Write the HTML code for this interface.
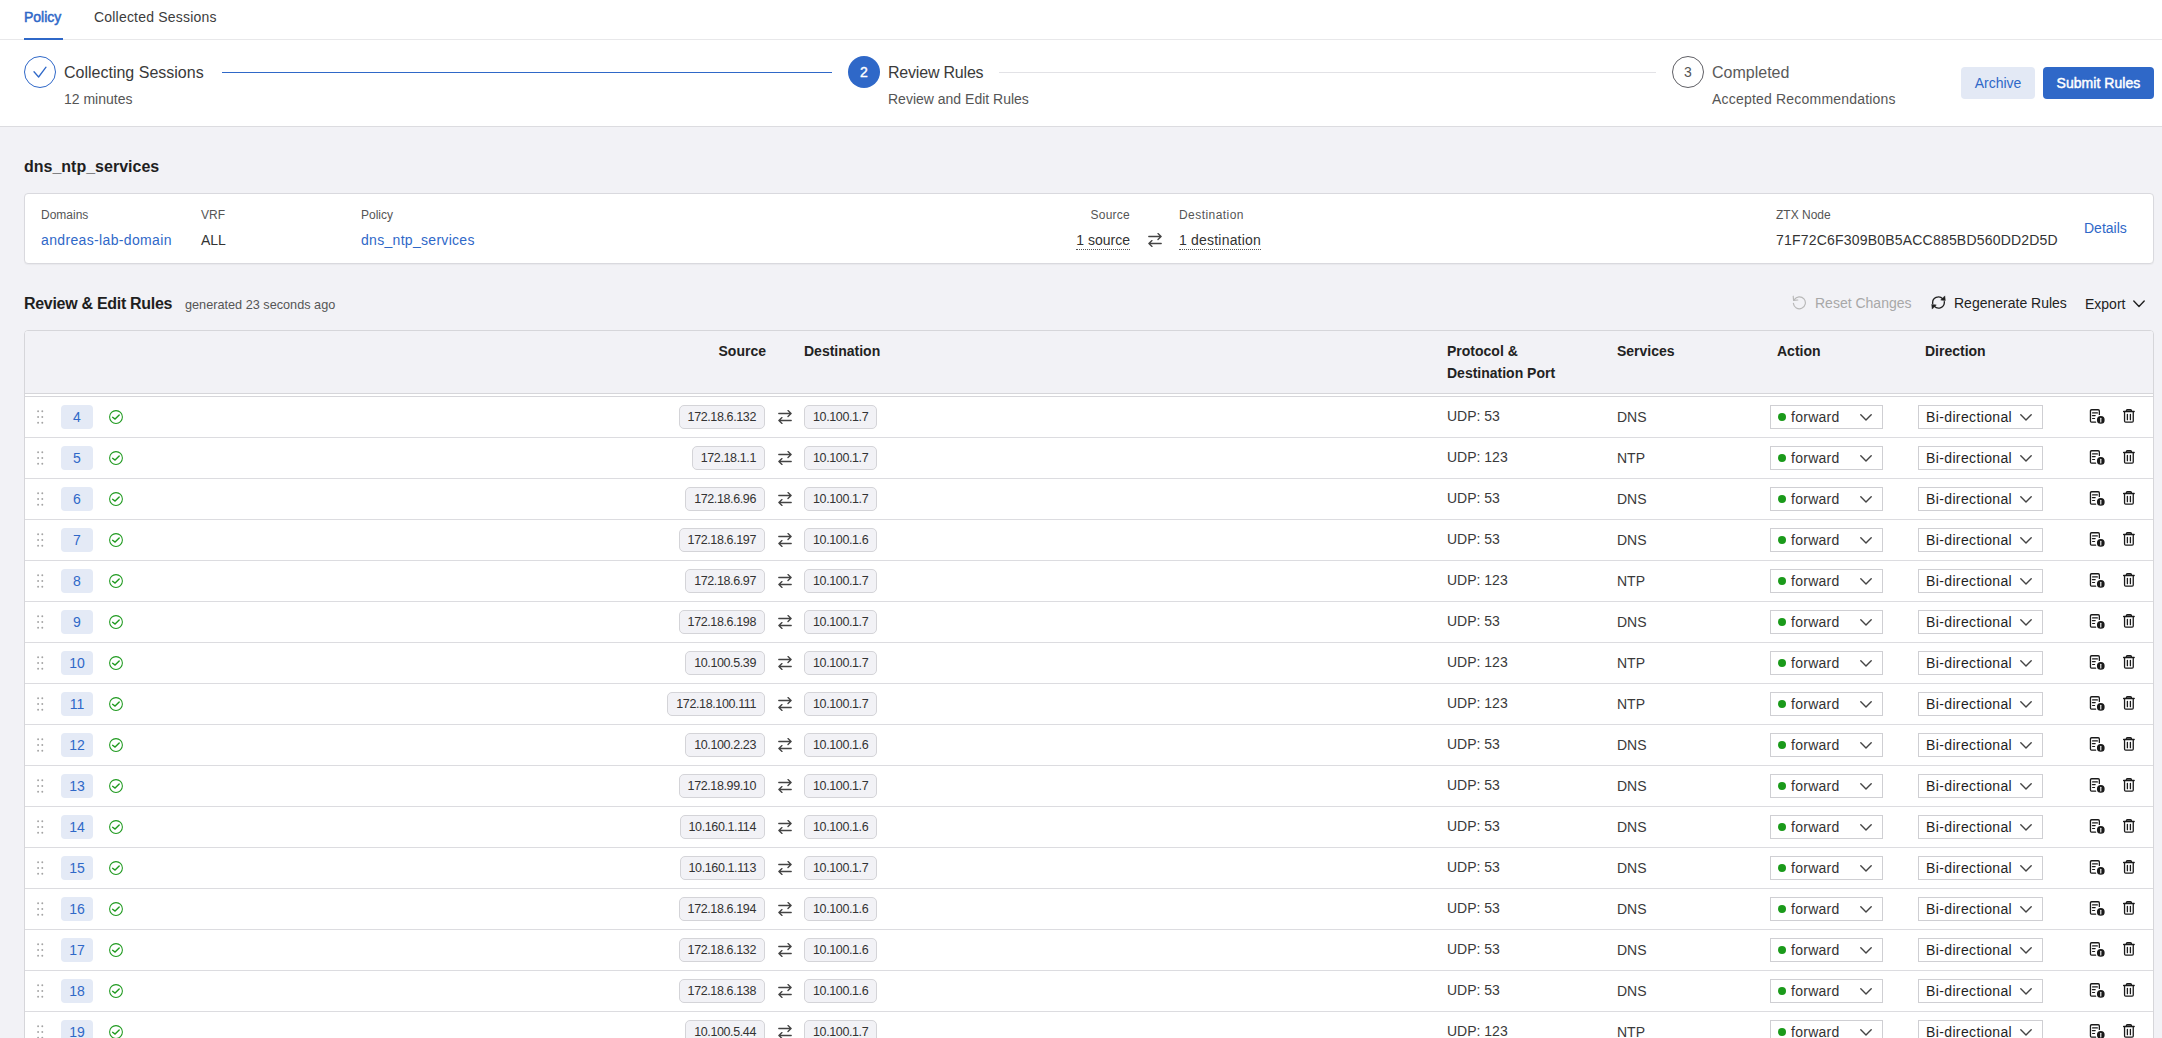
<!DOCTYPE html>
<html><head><meta charset="utf-8">
<style>
*{box-sizing:border-box;margin:0;padding:0}
html,body{width:2162px;height:1038px;overflow:hidden}
body{background:#f2f2f6;font-family:"Liberation Sans",sans-serif;color:#222;position:relative}
.abs{position:absolute;white-space:nowrap}
#top{position:absolute;left:0;top:0;width:2162px;height:127px;background:#fff;border-bottom:1px solid #dcdce0}
.tabline{position:absolute;left:0;top:39px;width:2162px;height:1px;background:#e8e8ea}
.tabul{position:absolute;left:24px;top:38px;width:39px;height:2px;background:#2f68c8}
.circ{position:absolute;width:32px;height:32px;border-radius:50%;top:56px}
.steptitle{position:absolute;top:63px;font-size:16px;line-height:20px;color:#3a3a3a;white-space:nowrap}
.stepsub{position:absolute;top:90px;font-size:14px;line-height:18px;color:#555;white-space:nowrap}
.btn{position:absolute;top:67px;height:32px;border-radius:4px;font-size:14px;line-height:32px;text-align:center;white-space:nowrap}
.card{position:absolute;left:24px;top:193px;width:2130px;height:71px;background:#fff;border:1px solid #d9d9de;border-radius:4px;box-shadow:0 1px 1px rgba(0,0,0,0.04)}
.lbl{position:absolute;top:208px;font-size:12px;line-height:15px;color:#555;white-space:nowrap}
.val{position:absolute;top:231px;font-size:14px;line-height:18px;color:#333;white-space:nowrap}
.link{color:#2f68c8}
.tbl{position:absolute;left:24px;top:330px;width:2130px;height:720px;background:#fff;border:1px solid #d6d6da;border-radius:4px 4px 0 0;overflow:hidden}
.thead{position:absolute;left:0;top:0;width:100%;height:63px;background:#f2f2f6;border-bottom:1px solid #d6d6da}
.tbline{position:absolute;left:0;top:65px;width:100%;height:1px;background:#d6d6da}
.th{position:absolute;font-size:14px;line-height:22px;font-weight:700;color:#222;white-space:nowrap}
.row{position:absolute;left:0;width:2162px;height:41px;border-bottom:1px solid #dcdce0}
.row > div{position:absolute}
.drag{left:37px;top:12px;width:8px;height:16px}
.num{left:61px;top:8px;width:32px;height:24px;border-radius:4px;background:#e4eaf6;color:#2f68c8;font-size:14px;line-height:24px;text-align:center}
.chk{left:109px;top:13px;width:14px;height:14px}
.pill{top:8px;height:24px;border:1px solid #d4d4d8;background:#f2f2f6;border-radius:5px;font-size:12.5px;line-height:22px;color:#333;white-space:nowrap;padding:0 8px;letter-spacing:-0.38px}
.src{right:calc(2162px - 765px)}
.dst{left:804px}
.rarr{left:778px;top:13px;width:14px;height:14px}
.proto{left:1447px;top:11px;font-size:14px;line-height:17px;color:#3a3a3a;white-space:nowrap}
.svc{left:1617px;top:12px;font-size:14px;line-height:17px;color:#3a3a3a}
.sel{top:8px;height:24px;border:1px solid #cfcfd3;background:#fff;font-size:14px;line-height:22px;color:#333;white-space:nowrap}
.act{left:1770px;width:113px}
.dir{left:1918px;width:125px}
.sel .dot{position:absolute;left:7px;top:7px;width:8px;height:8px;border-radius:50%;background:#1a9a1a}
.act .t{position:absolute;left:20px;top:0;letter-spacing:0.27px}
.dir .t{position:absolute;left:7px;top:0;color:#1f1f1f;letter-spacing:0.37px}
.sel .ch{position:absolute;top:8px;width:12px;height:7px}
.act .ch{left:89px}
.dir .ch{left:101px}
.doc{left:2089px;top:12px;width:16px;height:16px}
.trash{left:2122px;top:12px;width:14px;height:15px}

</style></head><body>
<div id="top">
  <div class="tabline"></div>
  <div class="tabul"></div>
  <div class="abs" style="left:24px;top:9px;font-size:14px;line-height:17px;color:#2f68c8;-webkit-text-stroke:0.5px #2f68c8">Policy</div>
  <div class="abs" style="left:94px;top:9px;font-size:14px;line-height:17px;color:#3c3c3c;letter-spacing:0.2px">Collected Sessions</div>

  <div class="circ" style="left:24px;border:1.2px solid #2f68c8"><svg width="32" height="32" viewBox="0 0 32 32" style="position:absolute;left:-1px;top:-1px"><path d="M10 15.8L14.6 21L22 11.2" fill="none" stroke="#2f68c8" stroke-width="1.3" stroke-linecap="round" stroke-linejoin="round"/></svg></div>
  <div class="steptitle" style="left:64px">Collecting Sessions</div>
  <div class="stepsub" style="left:64px">12 minutes</div>
  <div class="abs" style="left:222px;top:72px;width:610px;height:1px;background:#2f68c8"></div>

  <div class="circ" style="left:848px;background:#2f68c8;color:#fff;font-size:14px;line-height:32px;text-align:center;-webkit-text-stroke:0.4px #fff">2</div>
  <div class="steptitle" style="left:888px;letter-spacing:-0.2px">Review Rules</div>
  <div class="stepsub" style="left:888px">Review and Edit Rules</div>
  <div class="abs" style="left:999px;top:72px;width:657px;height:1px;background:#e2e2e6"></div>

  <div class="circ" style="left:1672px;border:1px solid #606066;color:#555;font-size:14px;line-height:30px;text-align:center">3</div>
  <div class="steptitle" style="left:1712px;color:#5a5a5a">Completed</div>
  <div class="stepsub" style="left:1712px;letter-spacing:0.2px">Accepted Recommendations</div>

  <div class="btn" style="left:1961px;width:74px;background:#e3e9f5;color:#2f68c8">Archive</div>
  <div class="btn" style="left:2043px;width:111px;background:#2f68c8;color:#fff;-webkit-text-stroke:0.45px #fff;letter-spacing:0.05px">Submit Rules</div>
</div>

<div class="abs" style="left:24px;top:157px;font-size:16px;line-height:20px;font-weight:700;color:#1f1f1f">dns_ntp_services</div>

<div class="card"></div>
<div class="lbl" style="left:41px">Domains</div>
<div class="val link" style="left:41px;letter-spacing:0.35px">andreas-lab-domain</div>
<div class="lbl" style="left:201px">VRF</div>
<div class="val" style="left:201px">ALL</div>
<div class="lbl" style="left:361px">Policy</div>
<div class="val link" style="left:361px;letter-spacing:0.3px">dns_ntp_services</div>
<div class="lbl" style="right:calc(2162px - 1130px);letter-spacing:0.25px">Source</div>
<div class="val" style="right:calc(2162px - 1130px);top:232px;border-bottom:1px dotted #555;line-height:17px">1 source</div>
<div class="abs" style="left:1148px;top:233px"><svg width="14" height="14" viewBox="0 0 14 14" style="display:block"><path d="M0.8 3.5H13.1M10 0.6L13.1 3.5L10 6.5M13.2 10.5H0.9M4 7.6L0.9 10.5L4 13.4" fill="none" stroke="#444" stroke-width="1.35" stroke-linecap="round" stroke-linejoin="round"/></svg></div>
<div class="lbl" style="left:1179px;letter-spacing:0.45px">Destination</div>
<div class="val" style="left:1179px;top:232px;border-bottom:1px dotted #555;line-height:17px;letter-spacing:0.2px">1 destination</div>
<div class="lbl" style="left:1776px">ZTX Node</div>
<div class="val" style="left:1776px;letter-spacing:0.2px">71F72C6F309B0B5ACC885BD560DD2D5D</div>
<div class="abs link" style="left:2084px;top:219px;font-size:14px;line-height:18px">Details</div>

<div class="abs" style="left:24px;top:294px;font-size:16px;line-height:20px;font-weight:700;color:#1f1f1f;letter-spacing:-0.3px">Review &amp; Edit Rules</div>
<div class="abs" style="left:185px;top:297px;font-size:12.7px;line-height:16px;color:#555">generated 23 seconds ago</div>

<div class="abs" style="left:1792px;top:295px"><svg width="15" height="15" viewBox="0 0 15 15" style="display:block"><path d="M2.3 4.6A6 6 0 1 1 1.4 8.4" fill="none" stroke="#b8b8b8" stroke-width="1.15" stroke-linecap="round"/><path d="M1.2 1.2L1.6 5.4L5.8 5" fill="none" stroke="#b8b8b8" stroke-width="1.15" stroke-linecap="round" stroke-linejoin="round"/></svg></div>
<div class="abs" style="left:1815px;top:295px;font-size:14px;line-height:17px;color:#a8a8a8">Reset Changes</div>
<div class="abs" style="left:1931px;top:295px"><svg width="15" height="15" viewBox="0 0 15 15" style="display:block"><path d="M1.7 8.4A5.8 5.8 0 0 1 11.8 3.9M13.3 6.6A5.8 5.8 0 0 1 3.2 11.1" fill="none" stroke="#222" stroke-width="1.35" stroke-linecap="round"/><path d="M13.8 0.9L14.3 5.6L9.7 5.1Z M1.2 14.1L0.7 9.4L5.3 9.9Z" fill="#222" stroke="#222" stroke-width="0.5" stroke-linejoin="round"/></svg></div>
<div class="abs" style="left:1954px;top:295px;font-size:14px;line-height:17px;color:#222">Regenerate Rules</div>
<div class="abs" style="left:2085px;top:296px;font-size:14px;line-height:17px;color:#222">Export</div>
<div class="abs" style="left:2133px;top:300px"><svg width="12" height="8" viewBox="0 0 12 8" style="display:block"><path d="M0.8 1L6 6.5L11.2 1" fill="none" stroke="#222" stroke-width="1.4" stroke-linecap="round" stroke-linejoin="round"/></svg></div>

<div class="tbl">
  <div class="thead"></div>
  <div class="tbline"></div>
</div>
<div class="th" style="right:calc(2162px - 766px);top:340px">Source</div>
<div class="th" style="left:804px;top:340px">Destination</div>
<div class="th" style="left:1447px;top:340px">Protocol &amp;<br>Destination Port</div>
<div class="th" style="left:1617px;top:340px">Services</div>
<div class="th" style="left:1777px;top:340px">Action</div>
<div class="th" style="left:1925px;top:340px">Direction</div>

<div style="position:absolute;left:25px;top:0;width:2128px;height:1038px;overflow:hidden">
<div style="position:absolute;left:-25px;top:0;width:2162px;height:1038px">
<div class="row" style="top:397px">
<div class="drag"><svg width="8" height="16" viewBox="0 0 8 16" style="display:block"><g fill="#a4a4a4"><circle cx="1.1" cy="2.3" r="0.95"/><circle cx="5.3" cy="2.3" r="0.95"/><circle cx="1.1" cy="8" r="0.95"/><circle cx="5.3" cy="8" r="0.95"/><circle cx="1.1" cy="13.7" r="0.95"/><circle cx="5.3" cy="13.7" r="0.95"/></g></svg></div>
<div class="num">4</div>
<div class="chk"><svg width="14" height="14" viewBox="0 0 14 14" style="display:block"><circle cx="7" cy="7" r="6.4" fill="none" stroke="#1f9a1f" stroke-width="1.05"/><path d="M3.6 7.3L6.1 9.1L10.2 4.9" fill="none" stroke="#1f9a1f" stroke-width="1.4" stroke-linecap="round" stroke-linejoin="round"/></svg></div>
<div class="pill src">172.18.6.132</div>
<div class="rarr"><svg width="14" height="14" viewBox="0 0 14 14" style="display:block"><path d="M0.8 3.5H13.1M10 0.6L13.1 3.5L10 6.5M13.2 10.5H0.9M4 7.6L0.9 10.5L4 13.4" fill="none" stroke="#444" stroke-width="1.35" stroke-linecap="round" stroke-linejoin="round"/></svg></div>
<div class="pill dst">10.100.1.7</div>
<div class="proto">UDP: 53</div>
<div class="svc">DNS</div>
<div class="sel act"><span class="dot"></span><span class="t">forward</span><span class="ch"><svg width="12" height="7" viewBox="0 0 12 7" style="display:block"><path d="M0.8 0.8L6 6L11.2 0.8" fill="none" stroke="#444" stroke-width="1.4" stroke-linecap="round" stroke-linejoin="round"/></svg></span></div>
<div class="sel dir"><span class="t">Bi-directional</span><span class="ch"><svg width="12" height="7" viewBox="0 0 12 7" style="display:block"><path d="M0.8 0.8L6 6L11.2 0.8" fill="none" stroke="#444" stroke-width="1.4" stroke-linecap="round" stroke-linejoin="round"/></svg></span></div>
<div class="ico doc"><svg width="16" height="16" viewBox="0 0 16 16" style="display:block"><path d="M6.6 13.15H2.6C1.95 13.15 1.45 12.65 1.45 12V1.9C1.45 1.25 1.95 0.75 2.6 0.75H9.2C9.85 0.75 10.35 1.25 10.35 1.9V5.4" fill="none" stroke="#1a1a1a" stroke-width="1.3" stroke-linecap="round"/><path d="M3.6 3.9H8.4M3.4 6.6H6.2M3.6 9.5H5.6" stroke="#1a1a1a" stroke-width="1.2" stroke-linecap="round"/><circle cx="11.8" cy="10.9" r="3.85" fill="#1a1a1a"/><path d="M11.8 9.3V13" stroke="#fff" stroke-width="1.1" stroke-linecap="round"/></svg></div>
<div class="ico trash"><svg width="14" height="15" viewBox="0 0 14 15" style="display:block"><path d="M2.55 3V12C2.55 12.65 3 13.15 3.7 13.15H10.1C10.8 13.15 11.25 12.65 11.25 12V3M1.6 2.5H12.2M4.3 2.4V1.8C4.3 1.2 4.8 0.75 5.4 0.75H8.4C9 0.75 9.5 1.2 9.5 1.8V2.4M5.4 5.3V10.7M8.4 5.3V10.7" fill="none" stroke="#1a1a1a" stroke-width="1.3" stroke-linecap="round" stroke-linejoin="round"/></svg></div>
</div>
<div class="row" style="top:438px">
<div class="drag"><svg width="8" height="16" viewBox="0 0 8 16" style="display:block"><g fill="#a4a4a4"><circle cx="1.1" cy="2.3" r="0.95"/><circle cx="5.3" cy="2.3" r="0.95"/><circle cx="1.1" cy="8" r="0.95"/><circle cx="5.3" cy="8" r="0.95"/><circle cx="1.1" cy="13.7" r="0.95"/><circle cx="5.3" cy="13.7" r="0.95"/></g></svg></div>
<div class="num">5</div>
<div class="chk"><svg width="14" height="14" viewBox="0 0 14 14" style="display:block"><circle cx="7" cy="7" r="6.4" fill="none" stroke="#1f9a1f" stroke-width="1.05"/><path d="M3.6 7.3L6.1 9.1L10.2 4.9" fill="none" stroke="#1f9a1f" stroke-width="1.4" stroke-linecap="round" stroke-linejoin="round"/></svg></div>
<div class="pill src">172.18.1.1</div>
<div class="rarr"><svg width="14" height="14" viewBox="0 0 14 14" style="display:block"><path d="M0.8 3.5H13.1M10 0.6L13.1 3.5L10 6.5M13.2 10.5H0.9M4 7.6L0.9 10.5L4 13.4" fill="none" stroke="#444" stroke-width="1.35" stroke-linecap="round" stroke-linejoin="round"/></svg></div>
<div class="pill dst">10.100.1.7</div>
<div class="proto">UDP: 123</div>
<div class="svc">NTP</div>
<div class="sel act"><span class="dot"></span><span class="t">forward</span><span class="ch"><svg width="12" height="7" viewBox="0 0 12 7" style="display:block"><path d="M0.8 0.8L6 6L11.2 0.8" fill="none" stroke="#444" stroke-width="1.4" stroke-linecap="round" stroke-linejoin="round"/></svg></span></div>
<div class="sel dir"><span class="t">Bi-directional</span><span class="ch"><svg width="12" height="7" viewBox="0 0 12 7" style="display:block"><path d="M0.8 0.8L6 6L11.2 0.8" fill="none" stroke="#444" stroke-width="1.4" stroke-linecap="round" stroke-linejoin="round"/></svg></span></div>
<div class="ico doc"><svg width="16" height="16" viewBox="0 0 16 16" style="display:block"><path d="M6.6 13.15H2.6C1.95 13.15 1.45 12.65 1.45 12V1.9C1.45 1.25 1.95 0.75 2.6 0.75H9.2C9.85 0.75 10.35 1.25 10.35 1.9V5.4" fill="none" stroke="#1a1a1a" stroke-width="1.3" stroke-linecap="round"/><path d="M3.6 3.9H8.4M3.4 6.6H6.2M3.6 9.5H5.6" stroke="#1a1a1a" stroke-width="1.2" stroke-linecap="round"/><circle cx="11.8" cy="10.9" r="3.85" fill="#1a1a1a"/><path d="M11.8 9.3V13" stroke="#fff" stroke-width="1.1" stroke-linecap="round"/></svg></div>
<div class="ico trash"><svg width="14" height="15" viewBox="0 0 14 15" style="display:block"><path d="M2.55 3V12C2.55 12.65 3 13.15 3.7 13.15H10.1C10.8 13.15 11.25 12.65 11.25 12V3M1.6 2.5H12.2M4.3 2.4V1.8C4.3 1.2 4.8 0.75 5.4 0.75H8.4C9 0.75 9.5 1.2 9.5 1.8V2.4M5.4 5.3V10.7M8.4 5.3V10.7" fill="none" stroke="#1a1a1a" stroke-width="1.3" stroke-linecap="round" stroke-linejoin="round"/></svg></div>
</div>
<div class="row" style="top:479px">
<div class="drag"><svg width="8" height="16" viewBox="0 0 8 16" style="display:block"><g fill="#a4a4a4"><circle cx="1.1" cy="2.3" r="0.95"/><circle cx="5.3" cy="2.3" r="0.95"/><circle cx="1.1" cy="8" r="0.95"/><circle cx="5.3" cy="8" r="0.95"/><circle cx="1.1" cy="13.7" r="0.95"/><circle cx="5.3" cy="13.7" r="0.95"/></g></svg></div>
<div class="num">6</div>
<div class="chk"><svg width="14" height="14" viewBox="0 0 14 14" style="display:block"><circle cx="7" cy="7" r="6.4" fill="none" stroke="#1f9a1f" stroke-width="1.05"/><path d="M3.6 7.3L6.1 9.1L10.2 4.9" fill="none" stroke="#1f9a1f" stroke-width="1.4" stroke-linecap="round" stroke-linejoin="round"/></svg></div>
<div class="pill src">172.18.6.96</div>
<div class="rarr"><svg width="14" height="14" viewBox="0 0 14 14" style="display:block"><path d="M0.8 3.5H13.1M10 0.6L13.1 3.5L10 6.5M13.2 10.5H0.9M4 7.6L0.9 10.5L4 13.4" fill="none" stroke="#444" stroke-width="1.35" stroke-linecap="round" stroke-linejoin="round"/></svg></div>
<div class="pill dst">10.100.1.7</div>
<div class="proto">UDP: 53</div>
<div class="svc">DNS</div>
<div class="sel act"><span class="dot"></span><span class="t">forward</span><span class="ch"><svg width="12" height="7" viewBox="0 0 12 7" style="display:block"><path d="M0.8 0.8L6 6L11.2 0.8" fill="none" stroke="#444" stroke-width="1.4" stroke-linecap="round" stroke-linejoin="round"/></svg></span></div>
<div class="sel dir"><span class="t">Bi-directional</span><span class="ch"><svg width="12" height="7" viewBox="0 0 12 7" style="display:block"><path d="M0.8 0.8L6 6L11.2 0.8" fill="none" stroke="#444" stroke-width="1.4" stroke-linecap="round" stroke-linejoin="round"/></svg></span></div>
<div class="ico doc"><svg width="16" height="16" viewBox="0 0 16 16" style="display:block"><path d="M6.6 13.15H2.6C1.95 13.15 1.45 12.65 1.45 12V1.9C1.45 1.25 1.95 0.75 2.6 0.75H9.2C9.85 0.75 10.35 1.25 10.35 1.9V5.4" fill="none" stroke="#1a1a1a" stroke-width="1.3" stroke-linecap="round"/><path d="M3.6 3.9H8.4M3.4 6.6H6.2M3.6 9.5H5.6" stroke="#1a1a1a" stroke-width="1.2" stroke-linecap="round"/><circle cx="11.8" cy="10.9" r="3.85" fill="#1a1a1a"/><path d="M11.8 9.3V13" stroke="#fff" stroke-width="1.1" stroke-linecap="round"/></svg></div>
<div class="ico trash"><svg width="14" height="15" viewBox="0 0 14 15" style="display:block"><path d="M2.55 3V12C2.55 12.65 3 13.15 3.7 13.15H10.1C10.8 13.15 11.25 12.65 11.25 12V3M1.6 2.5H12.2M4.3 2.4V1.8C4.3 1.2 4.8 0.75 5.4 0.75H8.4C9 0.75 9.5 1.2 9.5 1.8V2.4M5.4 5.3V10.7M8.4 5.3V10.7" fill="none" stroke="#1a1a1a" stroke-width="1.3" stroke-linecap="round" stroke-linejoin="round"/></svg></div>
</div>
<div class="row" style="top:520px">
<div class="drag"><svg width="8" height="16" viewBox="0 0 8 16" style="display:block"><g fill="#a4a4a4"><circle cx="1.1" cy="2.3" r="0.95"/><circle cx="5.3" cy="2.3" r="0.95"/><circle cx="1.1" cy="8" r="0.95"/><circle cx="5.3" cy="8" r="0.95"/><circle cx="1.1" cy="13.7" r="0.95"/><circle cx="5.3" cy="13.7" r="0.95"/></g></svg></div>
<div class="num">7</div>
<div class="chk"><svg width="14" height="14" viewBox="0 0 14 14" style="display:block"><circle cx="7" cy="7" r="6.4" fill="none" stroke="#1f9a1f" stroke-width="1.05"/><path d="M3.6 7.3L6.1 9.1L10.2 4.9" fill="none" stroke="#1f9a1f" stroke-width="1.4" stroke-linecap="round" stroke-linejoin="round"/></svg></div>
<div class="pill src">172.18.6.197</div>
<div class="rarr"><svg width="14" height="14" viewBox="0 0 14 14" style="display:block"><path d="M0.8 3.5H13.1M10 0.6L13.1 3.5L10 6.5M13.2 10.5H0.9M4 7.6L0.9 10.5L4 13.4" fill="none" stroke="#444" stroke-width="1.35" stroke-linecap="round" stroke-linejoin="round"/></svg></div>
<div class="pill dst">10.100.1.6</div>
<div class="proto">UDP: 53</div>
<div class="svc">DNS</div>
<div class="sel act"><span class="dot"></span><span class="t">forward</span><span class="ch"><svg width="12" height="7" viewBox="0 0 12 7" style="display:block"><path d="M0.8 0.8L6 6L11.2 0.8" fill="none" stroke="#444" stroke-width="1.4" stroke-linecap="round" stroke-linejoin="round"/></svg></span></div>
<div class="sel dir"><span class="t">Bi-directional</span><span class="ch"><svg width="12" height="7" viewBox="0 0 12 7" style="display:block"><path d="M0.8 0.8L6 6L11.2 0.8" fill="none" stroke="#444" stroke-width="1.4" stroke-linecap="round" stroke-linejoin="round"/></svg></span></div>
<div class="ico doc"><svg width="16" height="16" viewBox="0 0 16 16" style="display:block"><path d="M6.6 13.15H2.6C1.95 13.15 1.45 12.65 1.45 12V1.9C1.45 1.25 1.95 0.75 2.6 0.75H9.2C9.85 0.75 10.35 1.25 10.35 1.9V5.4" fill="none" stroke="#1a1a1a" stroke-width="1.3" stroke-linecap="round"/><path d="M3.6 3.9H8.4M3.4 6.6H6.2M3.6 9.5H5.6" stroke="#1a1a1a" stroke-width="1.2" stroke-linecap="round"/><circle cx="11.8" cy="10.9" r="3.85" fill="#1a1a1a"/><path d="M11.8 9.3V13" stroke="#fff" stroke-width="1.1" stroke-linecap="round"/></svg></div>
<div class="ico trash"><svg width="14" height="15" viewBox="0 0 14 15" style="display:block"><path d="M2.55 3V12C2.55 12.65 3 13.15 3.7 13.15H10.1C10.8 13.15 11.25 12.65 11.25 12V3M1.6 2.5H12.2M4.3 2.4V1.8C4.3 1.2 4.8 0.75 5.4 0.75H8.4C9 0.75 9.5 1.2 9.5 1.8V2.4M5.4 5.3V10.7M8.4 5.3V10.7" fill="none" stroke="#1a1a1a" stroke-width="1.3" stroke-linecap="round" stroke-linejoin="round"/></svg></div>
</div>
<div class="row" style="top:561px">
<div class="drag"><svg width="8" height="16" viewBox="0 0 8 16" style="display:block"><g fill="#a4a4a4"><circle cx="1.1" cy="2.3" r="0.95"/><circle cx="5.3" cy="2.3" r="0.95"/><circle cx="1.1" cy="8" r="0.95"/><circle cx="5.3" cy="8" r="0.95"/><circle cx="1.1" cy="13.7" r="0.95"/><circle cx="5.3" cy="13.7" r="0.95"/></g></svg></div>
<div class="num">8</div>
<div class="chk"><svg width="14" height="14" viewBox="0 0 14 14" style="display:block"><circle cx="7" cy="7" r="6.4" fill="none" stroke="#1f9a1f" stroke-width="1.05"/><path d="M3.6 7.3L6.1 9.1L10.2 4.9" fill="none" stroke="#1f9a1f" stroke-width="1.4" stroke-linecap="round" stroke-linejoin="round"/></svg></div>
<div class="pill src">172.18.6.97</div>
<div class="rarr"><svg width="14" height="14" viewBox="0 0 14 14" style="display:block"><path d="M0.8 3.5H13.1M10 0.6L13.1 3.5L10 6.5M13.2 10.5H0.9M4 7.6L0.9 10.5L4 13.4" fill="none" stroke="#444" stroke-width="1.35" stroke-linecap="round" stroke-linejoin="round"/></svg></div>
<div class="pill dst">10.100.1.7</div>
<div class="proto">UDP: 123</div>
<div class="svc">NTP</div>
<div class="sel act"><span class="dot"></span><span class="t">forward</span><span class="ch"><svg width="12" height="7" viewBox="0 0 12 7" style="display:block"><path d="M0.8 0.8L6 6L11.2 0.8" fill="none" stroke="#444" stroke-width="1.4" stroke-linecap="round" stroke-linejoin="round"/></svg></span></div>
<div class="sel dir"><span class="t">Bi-directional</span><span class="ch"><svg width="12" height="7" viewBox="0 0 12 7" style="display:block"><path d="M0.8 0.8L6 6L11.2 0.8" fill="none" stroke="#444" stroke-width="1.4" stroke-linecap="round" stroke-linejoin="round"/></svg></span></div>
<div class="ico doc"><svg width="16" height="16" viewBox="0 0 16 16" style="display:block"><path d="M6.6 13.15H2.6C1.95 13.15 1.45 12.65 1.45 12V1.9C1.45 1.25 1.95 0.75 2.6 0.75H9.2C9.85 0.75 10.35 1.25 10.35 1.9V5.4" fill="none" stroke="#1a1a1a" stroke-width="1.3" stroke-linecap="round"/><path d="M3.6 3.9H8.4M3.4 6.6H6.2M3.6 9.5H5.6" stroke="#1a1a1a" stroke-width="1.2" stroke-linecap="round"/><circle cx="11.8" cy="10.9" r="3.85" fill="#1a1a1a"/><path d="M11.8 9.3V13" stroke="#fff" stroke-width="1.1" stroke-linecap="round"/></svg></div>
<div class="ico trash"><svg width="14" height="15" viewBox="0 0 14 15" style="display:block"><path d="M2.55 3V12C2.55 12.65 3 13.15 3.7 13.15H10.1C10.8 13.15 11.25 12.65 11.25 12V3M1.6 2.5H12.2M4.3 2.4V1.8C4.3 1.2 4.8 0.75 5.4 0.75H8.4C9 0.75 9.5 1.2 9.5 1.8V2.4M5.4 5.3V10.7M8.4 5.3V10.7" fill="none" stroke="#1a1a1a" stroke-width="1.3" stroke-linecap="round" stroke-linejoin="round"/></svg></div>
</div>
<div class="row" style="top:602px">
<div class="drag"><svg width="8" height="16" viewBox="0 0 8 16" style="display:block"><g fill="#a4a4a4"><circle cx="1.1" cy="2.3" r="0.95"/><circle cx="5.3" cy="2.3" r="0.95"/><circle cx="1.1" cy="8" r="0.95"/><circle cx="5.3" cy="8" r="0.95"/><circle cx="1.1" cy="13.7" r="0.95"/><circle cx="5.3" cy="13.7" r="0.95"/></g></svg></div>
<div class="num">9</div>
<div class="chk"><svg width="14" height="14" viewBox="0 0 14 14" style="display:block"><circle cx="7" cy="7" r="6.4" fill="none" stroke="#1f9a1f" stroke-width="1.05"/><path d="M3.6 7.3L6.1 9.1L10.2 4.9" fill="none" stroke="#1f9a1f" stroke-width="1.4" stroke-linecap="round" stroke-linejoin="round"/></svg></div>
<div class="pill src">172.18.6.198</div>
<div class="rarr"><svg width="14" height="14" viewBox="0 0 14 14" style="display:block"><path d="M0.8 3.5H13.1M10 0.6L13.1 3.5L10 6.5M13.2 10.5H0.9M4 7.6L0.9 10.5L4 13.4" fill="none" stroke="#444" stroke-width="1.35" stroke-linecap="round" stroke-linejoin="round"/></svg></div>
<div class="pill dst">10.100.1.7</div>
<div class="proto">UDP: 53</div>
<div class="svc">DNS</div>
<div class="sel act"><span class="dot"></span><span class="t">forward</span><span class="ch"><svg width="12" height="7" viewBox="0 0 12 7" style="display:block"><path d="M0.8 0.8L6 6L11.2 0.8" fill="none" stroke="#444" stroke-width="1.4" stroke-linecap="round" stroke-linejoin="round"/></svg></span></div>
<div class="sel dir"><span class="t">Bi-directional</span><span class="ch"><svg width="12" height="7" viewBox="0 0 12 7" style="display:block"><path d="M0.8 0.8L6 6L11.2 0.8" fill="none" stroke="#444" stroke-width="1.4" stroke-linecap="round" stroke-linejoin="round"/></svg></span></div>
<div class="ico doc"><svg width="16" height="16" viewBox="0 0 16 16" style="display:block"><path d="M6.6 13.15H2.6C1.95 13.15 1.45 12.65 1.45 12V1.9C1.45 1.25 1.95 0.75 2.6 0.75H9.2C9.85 0.75 10.35 1.25 10.35 1.9V5.4" fill="none" stroke="#1a1a1a" stroke-width="1.3" stroke-linecap="round"/><path d="M3.6 3.9H8.4M3.4 6.6H6.2M3.6 9.5H5.6" stroke="#1a1a1a" stroke-width="1.2" stroke-linecap="round"/><circle cx="11.8" cy="10.9" r="3.85" fill="#1a1a1a"/><path d="M11.8 9.3V13" stroke="#fff" stroke-width="1.1" stroke-linecap="round"/></svg></div>
<div class="ico trash"><svg width="14" height="15" viewBox="0 0 14 15" style="display:block"><path d="M2.55 3V12C2.55 12.65 3 13.15 3.7 13.15H10.1C10.8 13.15 11.25 12.65 11.25 12V3M1.6 2.5H12.2M4.3 2.4V1.8C4.3 1.2 4.8 0.75 5.4 0.75H8.4C9 0.75 9.5 1.2 9.5 1.8V2.4M5.4 5.3V10.7M8.4 5.3V10.7" fill="none" stroke="#1a1a1a" stroke-width="1.3" stroke-linecap="round" stroke-linejoin="round"/></svg></div>
</div>
<div class="row" style="top:643px">
<div class="drag"><svg width="8" height="16" viewBox="0 0 8 16" style="display:block"><g fill="#a4a4a4"><circle cx="1.1" cy="2.3" r="0.95"/><circle cx="5.3" cy="2.3" r="0.95"/><circle cx="1.1" cy="8" r="0.95"/><circle cx="5.3" cy="8" r="0.95"/><circle cx="1.1" cy="13.7" r="0.95"/><circle cx="5.3" cy="13.7" r="0.95"/></g></svg></div>
<div class="num">10</div>
<div class="chk"><svg width="14" height="14" viewBox="0 0 14 14" style="display:block"><circle cx="7" cy="7" r="6.4" fill="none" stroke="#1f9a1f" stroke-width="1.05"/><path d="M3.6 7.3L6.1 9.1L10.2 4.9" fill="none" stroke="#1f9a1f" stroke-width="1.4" stroke-linecap="round" stroke-linejoin="round"/></svg></div>
<div class="pill src">10.100.5.39</div>
<div class="rarr"><svg width="14" height="14" viewBox="0 0 14 14" style="display:block"><path d="M0.8 3.5H13.1M10 0.6L13.1 3.5L10 6.5M13.2 10.5H0.9M4 7.6L0.9 10.5L4 13.4" fill="none" stroke="#444" stroke-width="1.35" stroke-linecap="round" stroke-linejoin="round"/></svg></div>
<div class="pill dst">10.100.1.7</div>
<div class="proto">UDP: 123</div>
<div class="svc">NTP</div>
<div class="sel act"><span class="dot"></span><span class="t">forward</span><span class="ch"><svg width="12" height="7" viewBox="0 0 12 7" style="display:block"><path d="M0.8 0.8L6 6L11.2 0.8" fill="none" stroke="#444" stroke-width="1.4" stroke-linecap="round" stroke-linejoin="round"/></svg></span></div>
<div class="sel dir"><span class="t">Bi-directional</span><span class="ch"><svg width="12" height="7" viewBox="0 0 12 7" style="display:block"><path d="M0.8 0.8L6 6L11.2 0.8" fill="none" stroke="#444" stroke-width="1.4" stroke-linecap="round" stroke-linejoin="round"/></svg></span></div>
<div class="ico doc"><svg width="16" height="16" viewBox="0 0 16 16" style="display:block"><path d="M6.6 13.15H2.6C1.95 13.15 1.45 12.65 1.45 12V1.9C1.45 1.25 1.95 0.75 2.6 0.75H9.2C9.85 0.75 10.35 1.25 10.35 1.9V5.4" fill="none" stroke="#1a1a1a" stroke-width="1.3" stroke-linecap="round"/><path d="M3.6 3.9H8.4M3.4 6.6H6.2M3.6 9.5H5.6" stroke="#1a1a1a" stroke-width="1.2" stroke-linecap="round"/><circle cx="11.8" cy="10.9" r="3.85" fill="#1a1a1a"/><path d="M11.8 9.3V13" stroke="#fff" stroke-width="1.1" stroke-linecap="round"/></svg></div>
<div class="ico trash"><svg width="14" height="15" viewBox="0 0 14 15" style="display:block"><path d="M2.55 3V12C2.55 12.65 3 13.15 3.7 13.15H10.1C10.8 13.15 11.25 12.65 11.25 12V3M1.6 2.5H12.2M4.3 2.4V1.8C4.3 1.2 4.8 0.75 5.4 0.75H8.4C9 0.75 9.5 1.2 9.5 1.8V2.4M5.4 5.3V10.7M8.4 5.3V10.7" fill="none" stroke="#1a1a1a" stroke-width="1.3" stroke-linecap="round" stroke-linejoin="round"/></svg></div>
</div>
<div class="row" style="top:684px">
<div class="drag"><svg width="8" height="16" viewBox="0 0 8 16" style="display:block"><g fill="#a4a4a4"><circle cx="1.1" cy="2.3" r="0.95"/><circle cx="5.3" cy="2.3" r="0.95"/><circle cx="1.1" cy="8" r="0.95"/><circle cx="5.3" cy="8" r="0.95"/><circle cx="1.1" cy="13.7" r="0.95"/><circle cx="5.3" cy="13.7" r="0.95"/></g></svg></div>
<div class="num">11</div>
<div class="chk"><svg width="14" height="14" viewBox="0 0 14 14" style="display:block"><circle cx="7" cy="7" r="6.4" fill="none" stroke="#1f9a1f" stroke-width="1.05"/><path d="M3.6 7.3L6.1 9.1L10.2 4.9" fill="none" stroke="#1f9a1f" stroke-width="1.4" stroke-linecap="round" stroke-linejoin="round"/></svg></div>
<div class="pill src">172.18.100.111</div>
<div class="rarr"><svg width="14" height="14" viewBox="0 0 14 14" style="display:block"><path d="M0.8 3.5H13.1M10 0.6L13.1 3.5L10 6.5M13.2 10.5H0.9M4 7.6L0.9 10.5L4 13.4" fill="none" stroke="#444" stroke-width="1.35" stroke-linecap="round" stroke-linejoin="round"/></svg></div>
<div class="pill dst">10.100.1.7</div>
<div class="proto">UDP: 123</div>
<div class="svc">NTP</div>
<div class="sel act"><span class="dot"></span><span class="t">forward</span><span class="ch"><svg width="12" height="7" viewBox="0 0 12 7" style="display:block"><path d="M0.8 0.8L6 6L11.2 0.8" fill="none" stroke="#444" stroke-width="1.4" stroke-linecap="round" stroke-linejoin="round"/></svg></span></div>
<div class="sel dir"><span class="t">Bi-directional</span><span class="ch"><svg width="12" height="7" viewBox="0 0 12 7" style="display:block"><path d="M0.8 0.8L6 6L11.2 0.8" fill="none" stroke="#444" stroke-width="1.4" stroke-linecap="round" stroke-linejoin="round"/></svg></span></div>
<div class="ico doc"><svg width="16" height="16" viewBox="0 0 16 16" style="display:block"><path d="M6.6 13.15H2.6C1.95 13.15 1.45 12.65 1.45 12V1.9C1.45 1.25 1.95 0.75 2.6 0.75H9.2C9.85 0.75 10.35 1.25 10.35 1.9V5.4" fill="none" stroke="#1a1a1a" stroke-width="1.3" stroke-linecap="round"/><path d="M3.6 3.9H8.4M3.4 6.6H6.2M3.6 9.5H5.6" stroke="#1a1a1a" stroke-width="1.2" stroke-linecap="round"/><circle cx="11.8" cy="10.9" r="3.85" fill="#1a1a1a"/><path d="M11.8 9.3V13" stroke="#fff" stroke-width="1.1" stroke-linecap="round"/></svg></div>
<div class="ico trash"><svg width="14" height="15" viewBox="0 0 14 15" style="display:block"><path d="M2.55 3V12C2.55 12.65 3 13.15 3.7 13.15H10.1C10.8 13.15 11.25 12.65 11.25 12V3M1.6 2.5H12.2M4.3 2.4V1.8C4.3 1.2 4.8 0.75 5.4 0.75H8.4C9 0.75 9.5 1.2 9.5 1.8V2.4M5.4 5.3V10.7M8.4 5.3V10.7" fill="none" stroke="#1a1a1a" stroke-width="1.3" stroke-linecap="round" stroke-linejoin="round"/></svg></div>
</div>
<div class="row" style="top:725px">
<div class="drag"><svg width="8" height="16" viewBox="0 0 8 16" style="display:block"><g fill="#a4a4a4"><circle cx="1.1" cy="2.3" r="0.95"/><circle cx="5.3" cy="2.3" r="0.95"/><circle cx="1.1" cy="8" r="0.95"/><circle cx="5.3" cy="8" r="0.95"/><circle cx="1.1" cy="13.7" r="0.95"/><circle cx="5.3" cy="13.7" r="0.95"/></g></svg></div>
<div class="num">12</div>
<div class="chk"><svg width="14" height="14" viewBox="0 0 14 14" style="display:block"><circle cx="7" cy="7" r="6.4" fill="none" stroke="#1f9a1f" stroke-width="1.05"/><path d="M3.6 7.3L6.1 9.1L10.2 4.9" fill="none" stroke="#1f9a1f" stroke-width="1.4" stroke-linecap="round" stroke-linejoin="round"/></svg></div>
<div class="pill src">10.100.2.23</div>
<div class="rarr"><svg width="14" height="14" viewBox="0 0 14 14" style="display:block"><path d="M0.8 3.5H13.1M10 0.6L13.1 3.5L10 6.5M13.2 10.5H0.9M4 7.6L0.9 10.5L4 13.4" fill="none" stroke="#444" stroke-width="1.35" stroke-linecap="round" stroke-linejoin="round"/></svg></div>
<div class="pill dst">10.100.1.6</div>
<div class="proto">UDP: 53</div>
<div class="svc">DNS</div>
<div class="sel act"><span class="dot"></span><span class="t">forward</span><span class="ch"><svg width="12" height="7" viewBox="0 0 12 7" style="display:block"><path d="M0.8 0.8L6 6L11.2 0.8" fill="none" stroke="#444" stroke-width="1.4" stroke-linecap="round" stroke-linejoin="round"/></svg></span></div>
<div class="sel dir"><span class="t">Bi-directional</span><span class="ch"><svg width="12" height="7" viewBox="0 0 12 7" style="display:block"><path d="M0.8 0.8L6 6L11.2 0.8" fill="none" stroke="#444" stroke-width="1.4" stroke-linecap="round" stroke-linejoin="round"/></svg></span></div>
<div class="ico doc"><svg width="16" height="16" viewBox="0 0 16 16" style="display:block"><path d="M6.6 13.15H2.6C1.95 13.15 1.45 12.65 1.45 12V1.9C1.45 1.25 1.95 0.75 2.6 0.75H9.2C9.85 0.75 10.35 1.25 10.35 1.9V5.4" fill="none" stroke="#1a1a1a" stroke-width="1.3" stroke-linecap="round"/><path d="M3.6 3.9H8.4M3.4 6.6H6.2M3.6 9.5H5.6" stroke="#1a1a1a" stroke-width="1.2" stroke-linecap="round"/><circle cx="11.8" cy="10.9" r="3.85" fill="#1a1a1a"/><path d="M11.8 9.3V13" stroke="#fff" stroke-width="1.1" stroke-linecap="round"/></svg></div>
<div class="ico trash"><svg width="14" height="15" viewBox="0 0 14 15" style="display:block"><path d="M2.55 3V12C2.55 12.65 3 13.15 3.7 13.15H10.1C10.8 13.15 11.25 12.65 11.25 12V3M1.6 2.5H12.2M4.3 2.4V1.8C4.3 1.2 4.8 0.75 5.4 0.75H8.4C9 0.75 9.5 1.2 9.5 1.8V2.4M5.4 5.3V10.7M8.4 5.3V10.7" fill="none" stroke="#1a1a1a" stroke-width="1.3" stroke-linecap="round" stroke-linejoin="round"/></svg></div>
</div>
<div class="row" style="top:766px">
<div class="drag"><svg width="8" height="16" viewBox="0 0 8 16" style="display:block"><g fill="#a4a4a4"><circle cx="1.1" cy="2.3" r="0.95"/><circle cx="5.3" cy="2.3" r="0.95"/><circle cx="1.1" cy="8" r="0.95"/><circle cx="5.3" cy="8" r="0.95"/><circle cx="1.1" cy="13.7" r="0.95"/><circle cx="5.3" cy="13.7" r="0.95"/></g></svg></div>
<div class="num">13</div>
<div class="chk"><svg width="14" height="14" viewBox="0 0 14 14" style="display:block"><circle cx="7" cy="7" r="6.4" fill="none" stroke="#1f9a1f" stroke-width="1.05"/><path d="M3.6 7.3L6.1 9.1L10.2 4.9" fill="none" stroke="#1f9a1f" stroke-width="1.4" stroke-linecap="round" stroke-linejoin="round"/></svg></div>
<div class="pill src">172.18.99.10</div>
<div class="rarr"><svg width="14" height="14" viewBox="0 0 14 14" style="display:block"><path d="M0.8 3.5H13.1M10 0.6L13.1 3.5L10 6.5M13.2 10.5H0.9M4 7.6L0.9 10.5L4 13.4" fill="none" stroke="#444" stroke-width="1.35" stroke-linecap="round" stroke-linejoin="round"/></svg></div>
<div class="pill dst">10.100.1.7</div>
<div class="proto">UDP: 53</div>
<div class="svc">DNS</div>
<div class="sel act"><span class="dot"></span><span class="t">forward</span><span class="ch"><svg width="12" height="7" viewBox="0 0 12 7" style="display:block"><path d="M0.8 0.8L6 6L11.2 0.8" fill="none" stroke="#444" stroke-width="1.4" stroke-linecap="round" stroke-linejoin="round"/></svg></span></div>
<div class="sel dir"><span class="t">Bi-directional</span><span class="ch"><svg width="12" height="7" viewBox="0 0 12 7" style="display:block"><path d="M0.8 0.8L6 6L11.2 0.8" fill="none" stroke="#444" stroke-width="1.4" stroke-linecap="round" stroke-linejoin="round"/></svg></span></div>
<div class="ico doc"><svg width="16" height="16" viewBox="0 0 16 16" style="display:block"><path d="M6.6 13.15H2.6C1.95 13.15 1.45 12.65 1.45 12V1.9C1.45 1.25 1.95 0.75 2.6 0.75H9.2C9.85 0.75 10.35 1.25 10.35 1.9V5.4" fill="none" stroke="#1a1a1a" stroke-width="1.3" stroke-linecap="round"/><path d="M3.6 3.9H8.4M3.4 6.6H6.2M3.6 9.5H5.6" stroke="#1a1a1a" stroke-width="1.2" stroke-linecap="round"/><circle cx="11.8" cy="10.9" r="3.85" fill="#1a1a1a"/><path d="M11.8 9.3V13" stroke="#fff" stroke-width="1.1" stroke-linecap="round"/></svg></div>
<div class="ico trash"><svg width="14" height="15" viewBox="0 0 14 15" style="display:block"><path d="M2.55 3V12C2.55 12.65 3 13.15 3.7 13.15H10.1C10.8 13.15 11.25 12.65 11.25 12V3M1.6 2.5H12.2M4.3 2.4V1.8C4.3 1.2 4.8 0.75 5.4 0.75H8.4C9 0.75 9.5 1.2 9.5 1.8V2.4M5.4 5.3V10.7M8.4 5.3V10.7" fill="none" stroke="#1a1a1a" stroke-width="1.3" stroke-linecap="round" stroke-linejoin="round"/></svg></div>
</div>
<div class="row" style="top:807px">
<div class="drag"><svg width="8" height="16" viewBox="0 0 8 16" style="display:block"><g fill="#a4a4a4"><circle cx="1.1" cy="2.3" r="0.95"/><circle cx="5.3" cy="2.3" r="0.95"/><circle cx="1.1" cy="8" r="0.95"/><circle cx="5.3" cy="8" r="0.95"/><circle cx="1.1" cy="13.7" r="0.95"/><circle cx="5.3" cy="13.7" r="0.95"/></g></svg></div>
<div class="num">14</div>
<div class="chk"><svg width="14" height="14" viewBox="0 0 14 14" style="display:block"><circle cx="7" cy="7" r="6.4" fill="none" stroke="#1f9a1f" stroke-width="1.05"/><path d="M3.6 7.3L6.1 9.1L10.2 4.9" fill="none" stroke="#1f9a1f" stroke-width="1.4" stroke-linecap="round" stroke-linejoin="round"/></svg></div>
<div class="pill src">10.160.1.114</div>
<div class="rarr"><svg width="14" height="14" viewBox="0 0 14 14" style="display:block"><path d="M0.8 3.5H13.1M10 0.6L13.1 3.5L10 6.5M13.2 10.5H0.9M4 7.6L0.9 10.5L4 13.4" fill="none" stroke="#444" stroke-width="1.35" stroke-linecap="round" stroke-linejoin="round"/></svg></div>
<div class="pill dst">10.100.1.6</div>
<div class="proto">UDP: 53</div>
<div class="svc">DNS</div>
<div class="sel act"><span class="dot"></span><span class="t">forward</span><span class="ch"><svg width="12" height="7" viewBox="0 0 12 7" style="display:block"><path d="M0.8 0.8L6 6L11.2 0.8" fill="none" stroke="#444" stroke-width="1.4" stroke-linecap="round" stroke-linejoin="round"/></svg></span></div>
<div class="sel dir"><span class="t">Bi-directional</span><span class="ch"><svg width="12" height="7" viewBox="0 0 12 7" style="display:block"><path d="M0.8 0.8L6 6L11.2 0.8" fill="none" stroke="#444" stroke-width="1.4" stroke-linecap="round" stroke-linejoin="round"/></svg></span></div>
<div class="ico doc"><svg width="16" height="16" viewBox="0 0 16 16" style="display:block"><path d="M6.6 13.15H2.6C1.95 13.15 1.45 12.65 1.45 12V1.9C1.45 1.25 1.95 0.75 2.6 0.75H9.2C9.85 0.75 10.35 1.25 10.35 1.9V5.4" fill="none" stroke="#1a1a1a" stroke-width="1.3" stroke-linecap="round"/><path d="M3.6 3.9H8.4M3.4 6.6H6.2M3.6 9.5H5.6" stroke="#1a1a1a" stroke-width="1.2" stroke-linecap="round"/><circle cx="11.8" cy="10.9" r="3.85" fill="#1a1a1a"/><path d="M11.8 9.3V13" stroke="#fff" stroke-width="1.1" stroke-linecap="round"/></svg></div>
<div class="ico trash"><svg width="14" height="15" viewBox="0 0 14 15" style="display:block"><path d="M2.55 3V12C2.55 12.65 3 13.15 3.7 13.15H10.1C10.8 13.15 11.25 12.65 11.25 12V3M1.6 2.5H12.2M4.3 2.4V1.8C4.3 1.2 4.8 0.75 5.4 0.75H8.4C9 0.75 9.5 1.2 9.5 1.8V2.4M5.4 5.3V10.7M8.4 5.3V10.7" fill="none" stroke="#1a1a1a" stroke-width="1.3" stroke-linecap="round" stroke-linejoin="round"/></svg></div>
</div>
<div class="row" style="top:848px">
<div class="drag"><svg width="8" height="16" viewBox="0 0 8 16" style="display:block"><g fill="#a4a4a4"><circle cx="1.1" cy="2.3" r="0.95"/><circle cx="5.3" cy="2.3" r="0.95"/><circle cx="1.1" cy="8" r="0.95"/><circle cx="5.3" cy="8" r="0.95"/><circle cx="1.1" cy="13.7" r="0.95"/><circle cx="5.3" cy="13.7" r="0.95"/></g></svg></div>
<div class="num">15</div>
<div class="chk"><svg width="14" height="14" viewBox="0 0 14 14" style="display:block"><circle cx="7" cy="7" r="6.4" fill="none" stroke="#1f9a1f" stroke-width="1.05"/><path d="M3.6 7.3L6.1 9.1L10.2 4.9" fill="none" stroke="#1f9a1f" stroke-width="1.4" stroke-linecap="round" stroke-linejoin="round"/></svg></div>
<div class="pill src">10.160.1.113</div>
<div class="rarr"><svg width="14" height="14" viewBox="0 0 14 14" style="display:block"><path d="M0.8 3.5H13.1M10 0.6L13.1 3.5L10 6.5M13.2 10.5H0.9M4 7.6L0.9 10.5L4 13.4" fill="none" stroke="#444" stroke-width="1.35" stroke-linecap="round" stroke-linejoin="round"/></svg></div>
<div class="pill dst">10.100.1.7</div>
<div class="proto">UDP: 53</div>
<div class="svc">DNS</div>
<div class="sel act"><span class="dot"></span><span class="t">forward</span><span class="ch"><svg width="12" height="7" viewBox="0 0 12 7" style="display:block"><path d="M0.8 0.8L6 6L11.2 0.8" fill="none" stroke="#444" stroke-width="1.4" stroke-linecap="round" stroke-linejoin="round"/></svg></span></div>
<div class="sel dir"><span class="t">Bi-directional</span><span class="ch"><svg width="12" height="7" viewBox="0 0 12 7" style="display:block"><path d="M0.8 0.8L6 6L11.2 0.8" fill="none" stroke="#444" stroke-width="1.4" stroke-linecap="round" stroke-linejoin="round"/></svg></span></div>
<div class="ico doc"><svg width="16" height="16" viewBox="0 0 16 16" style="display:block"><path d="M6.6 13.15H2.6C1.95 13.15 1.45 12.65 1.45 12V1.9C1.45 1.25 1.95 0.75 2.6 0.75H9.2C9.85 0.75 10.35 1.25 10.35 1.9V5.4" fill="none" stroke="#1a1a1a" stroke-width="1.3" stroke-linecap="round"/><path d="M3.6 3.9H8.4M3.4 6.6H6.2M3.6 9.5H5.6" stroke="#1a1a1a" stroke-width="1.2" stroke-linecap="round"/><circle cx="11.8" cy="10.9" r="3.85" fill="#1a1a1a"/><path d="M11.8 9.3V13" stroke="#fff" stroke-width="1.1" stroke-linecap="round"/></svg></div>
<div class="ico trash"><svg width="14" height="15" viewBox="0 0 14 15" style="display:block"><path d="M2.55 3V12C2.55 12.65 3 13.15 3.7 13.15H10.1C10.8 13.15 11.25 12.65 11.25 12V3M1.6 2.5H12.2M4.3 2.4V1.8C4.3 1.2 4.8 0.75 5.4 0.75H8.4C9 0.75 9.5 1.2 9.5 1.8V2.4M5.4 5.3V10.7M8.4 5.3V10.7" fill="none" stroke="#1a1a1a" stroke-width="1.3" stroke-linecap="round" stroke-linejoin="round"/></svg></div>
</div>
<div class="row" style="top:889px">
<div class="drag"><svg width="8" height="16" viewBox="0 0 8 16" style="display:block"><g fill="#a4a4a4"><circle cx="1.1" cy="2.3" r="0.95"/><circle cx="5.3" cy="2.3" r="0.95"/><circle cx="1.1" cy="8" r="0.95"/><circle cx="5.3" cy="8" r="0.95"/><circle cx="1.1" cy="13.7" r="0.95"/><circle cx="5.3" cy="13.7" r="0.95"/></g></svg></div>
<div class="num">16</div>
<div class="chk"><svg width="14" height="14" viewBox="0 0 14 14" style="display:block"><circle cx="7" cy="7" r="6.4" fill="none" stroke="#1f9a1f" stroke-width="1.05"/><path d="M3.6 7.3L6.1 9.1L10.2 4.9" fill="none" stroke="#1f9a1f" stroke-width="1.4" stroke-linecap="round" stroke-linejoin="round"/></svg></div>
<div class="pill src">172.18.6.194</div>
<div class="rarr"><svg width="14" height="14" viewBox="0 0 14 14" style="display:block"><path d="M0.8 3.5H13.1M10 0.6L13.1 3.5L10 6.5M13.2 10.5H0.9M4 7.6L0.9 10.5L4 13.4" fill="none" stroke="#444" stroke-width="1.35" stroke-linecap="round" stroke-linejoin="round"/></svg></div>
<div class="pill dst">10.100.1.6</div>
<div class="proto">UDP: 53</div>
<div class="svc">DNS</div>
<div class="sel act"><span class="dot"></span><span class="t">forward</span><span class="ch"><svg width="12" height="7" viewBox="0 0 12 7" style="display:block"><path d="M0.8 0.8L6 6L11.2 0.8" fill="none" stroke="#444" stroke-width="1.4" stroke-linecap="round" stroke-linejoin="round"/></svg></span></div>
<div class="sel dir"><span class="t">Bi-directional</span><span class="ch"><svg width="12" height="7" viewBox="0 0 12 7" style="display:block"><path d="M0.8 0.8L6 6L11.2 0.8" fill="none" stroke="#444" stroke-width="1.4" stroke-linecap="round" stroke-linejoin="round"/></svg></span></div>
<div class="ico doc"><svg width="16" height="16" viewBox="0 0 16 16" style="display:block"><path d="M6.6 13.15H2.6C1.95 13.15 1.45 12.65 1.45 12V1.9C1.45 1.25 1.95 0.75 2.6 0.75H9.2C9.85 0.75 10.35 1.25 10.35 1.9V5.4" fill="none" stroke="#1a1a1a" stroke-width="1.3" stroke-linecap="round"/><path d="M3.6 3.9H8.4M3.4 6.6H6.2M3.6 9.5H5.6" stroke="#1a1a1a" stroke-width="1.2" stroke-linecap="round"/><circle cx="11.8" cy="10.9" r="3.85" fill="#1a1a1a"/><path d="M11.8 9.3V13" stroke="#fff" stroke-width="1.1" stroke-linecap="round"/></svg></div>
<div class="ico trash"><svg width="14" height="15" viewBox="0 0 14 15" style="display:block"><path d="M2.55 3V12C2.55 12.65 3 13.15 3.7 13.15H10.1C10.8 13.15 11.25 12.65 11.25 12V3M1.6 2.5H12.2M4.3 2.4V1.8C4.3 1.2 4.8 0.75 5.4 0.75H8.4C9 0.75 9.5 1.2 9.5 1.8V2.4M5.4 5.3V10.7M8.4 5.3V10.7" fill="none" stroke="#1a1a1a" stroke-width="1.3" stroke-linecap="round" stroke-linejoin="round"/></svg></div>
</div>
<div class="row" style="top:930px">
<div class="drag"><svg width="8" height="16" viewBox="0 0 8 16" style="display:block"><g fill="#a4a4a4"><circle cx="1.1" cy="2.3" r="0.95"/><circle cx="5.3" cy="2.3" r="0.95"/><circle cx="1.1" cy="8" r="0.95"/><circle cx="5.3" cy="8" r="0.95"/><circle cx="1.1" cy="13.7" r="0.95"/><circle cx="5.3" cy="13.7" r="0.95"/></g></svg></div>
<div class="num">17</div>
<div class="chk"><svg width="14" height="14" viewBox="0 0 14 14" style="display:block"><circle cx="7" cy="7" r="6.4" fill="none" stroke="#1f9a1f" stroke-width="1.05"/><path d="M3.6 7.3L6.1 9.1L10.2 4.9" fill="none" stroke="#1f9a1f" stroke-width="1.4" stroke-linecap="round" stroke-linejoin="round"/></svg></div>
<div class="pill src">172.18.6.132</div>
<div class="rarr"><svg width="14" height="14" viewBox="0 0 14 14" style="display:block"><path d="M0.8 3.5H13.1M10 0.6L13.1 3.5L10 6.5M13.2 10.5H0.9M4 7.6L0.9 10.5L4 13.4" fill="none" stroke="#444" stroke-width="1.35" stroke-linecap="round" stroke-linejoin="round"/></svg></div>
<div class="pill dst">10.100.1.6</div>
<div class="proto">UDP: 53</div>
<div class="svc">DNS</div>
<div class="sel act"><span class="dot"></span><span class="t">forward</span><span class="ch"><svg width="12" height="7" viewBox="0 0 12 7" style="display:block"><path d="M0.8 0.8L6 6L11.2 0.8" fill="none" stroke="#444" stroke-width="1.4" stroke-linecap="round" stroke-linejoin="round"/></svg></span></div>
<div class="sel dir"><span class="t">Bi-directional</span><span class="ch"><svg width="12" height="7" viewBox="0 0 12 7" style="display:block"><path d="M0.8 0.8L6 6L11.2 0.8" fill="none" stroke="#444" stroke-width="1.4" stroke-linecap="round" stroke-linejoin="round"/></svg></span></div>
<div class="ico doc"><svg width="16" height="16" viewBox="0 0 16 16" style="display:block"><path d="M6.6 13.15H2.6C1.95 13.15 1.45 12.65 1.45 12V1.9C1.45 1.25 1.95 0.75 2.6 0.75H9.2C9.85 0.75 10.35 1.25 10.35 1.9V5.4" fill="none" stroke="#1a1a1a" stroke-width="1.3" stroke-linecap="round"/><path d="M3.6 3.9H8.4M3.4 6.6H6.2M3.6 9.5H5.6" stroke="#1a1a1a" stroke-width="1.2" stroke-linecap="round"/><circle cx="11.8" cy="10.9" r="3.85" fill="#1a1a1a"/><path d="M11.8 9.3V13" stroke="#fff" stroke-width="1.1" stroke-linecap="round"/></svg></div>
<div class="ico trash"><svg width="14" height="15" viewBox="0 0 14 15" style="display:block"><path d="M2.55 3V12C2.55 12.65 3 13.15 3.7 13.15H10.1C10.8 13.15 11.25 12.65 11.25 12V3M1.6 2.5H12.2M4.3 2.4V1.8C4.3 1.2 4.8 0.75 5.4 0.75H8.4C9 0.75 9.5 1.2 9.5 1.8V2.4M5.4 5.3V10.7M8.4 5.3V10.7" fill="none" stroke="#1a1a1a" stroke-width="1.3" stroke-linecap="round" stroke-linejoin="round"/></svg></div>
</div>
<div class="row" style="top:971px">
<div class="drag"><svg width="8" height="16" viewBox="0 0 8 16" style="display:block"><g fill="#a4a4a4"><circle cx="1.1" cy="2.3" r="0.95"/><circle cx="5.3" cy="2.3" r="0.95"/><circle cx="1.1" cy="8" r="0.95"/><circle cx="5.3" cy="8" r="0.95"/><circle cx="1.1" cy="13.7" r="0.95"/><circle cx="5.3" cy="13.7" r="0.95"/></g></svg></div>
<div class="num">18</div>
<div class="chk"><svg width="14" height="14" viewBox="0 0 14 14" style="display:block"><circle cx="7" cy="7" r="6.4" fill="none" stroke="#1f9a1f" stroke-width="1.05"/><path d="M3.6 7.3L6.1 9.1L10.2 4.9" fill="none" stroke="#1f9a1f" stroke-width="1.4" stroke-linecap="round" stroke-linejoin="round"/></svg></div>
<div class="pill src">172.18.6.138</div>
<div class="rarr"><svg width="14" height="14" viewBox="0 0 14 14" style="display:block"><path d="M0.8 3.5H13.1M10 0.6L13.1 3.5L10 6.5M13.2 10.5H0.9M4 7.6L0.9 10.5L4 13.4" fill="none" stroke="#444" stroke-width="1.35" stroke-linecap="round" stroke-linejoin="round"/></svg></div>
<div class="pill dst">10.100.1.6</div>
<div class="proto">UDP: 53</div>
<div class="svc">DNS</div>
<div class="sel act"><span class="dot"></span><span class="t">forward</span><span class="ch"><svg width="12" height="7" viewBox="0 0 12 7" style="display:block"><path d="M0.8 0.8L6 6L11.2 0.8" fill="none" stroke="#444" stroke-width="1.4" stroke-linecap="round" stroke-linejoin="round"/></svg></span></div>
<div class="sel dir"><span class="t">Bi-directional</span><span class="ch"><svg width="12" height="7" viewBox="0 0 12 7" style="display:block"><path d="M0.8 0.8L6 6L11.2 0.8" fill="none" stroke="#444" stroke-width="1.4" stroke-linecap="round" stroke-linejoin="round"/></svg></span></div>
<div class="ico doc"><svg width="16" height="16" viewBox="0 0 16 16" style="display:block"><path d="M6.6 13.15H2.6C1.95 13.15 1.45 12.65 1.45 12V1.9C1.45 1.25 1.95 0.75 2.6 0.75H9.2C9.85 0.75 10.35 1.25 10.35 1.9V5.4" fill="none" stroke="#1a1a1a" stroke-width="1.3" stroke-linecap="round"/><path d="M3.6 3.9H8.4M3.4 6.6H6.2M3.6 9.5H5.6" stroke="#1a1a1a" stroke-width="1.2" stroke-linecap="round"/><circle cx="11.8" cy="10.9" r="3.85" fill="#1a1a1a"/><path d="M11.8 9.3V13" stroke="#fff" stroke-width="1.1" stroke-linecap="round"/></svg></div>
<div class="ico trash"><svg width="14" height="15" viewBox="0 0 14 15" style="display:block"><path d="M2.55 3V12C2.55 12.65 3 13.15 3.7 13.15H10.1C10.8 13.15 11.25 12.65 11.25 12V3M1.6 2.5H12.2M4.3 2.4V1.8C4.3 1.2 4.8 0.75 5.4 0.75H8.4C9 0.75 9.5 1.2 9.5 1.8V2.4M5.4 5.3V10.7M8.4 5.3V10.7" fill="none" stroke="#1a1a1a" stroke-width="1.3" stroke-linecap="round" stroke-linejoin="round"/></svg></div>
</div>
<div class="row" style="top:1012px">
<div class="drag"><svg width="8" height="16" viewBox="0 0 8 16" style="display:block"><g fill="#a4a4a4"><circle cx="1.1" cy="2.3" r="0.95"/><circle cx="5.3" cy="2.3" r="0.95"/><circle cx="1.1" cy="8" r="0.95"/><circle cx="5.3" cy="8" r="0.95"/><circle cx="1.1" cy="13.7" r="0.95"/><circle cx="5.3" cy="13.7" r="0.95"/></g></svg></div>
<div class="num">19</div>
<div class="chk"><svg width="14" height="14" viewBox="0 0 14 14" style="display:block"><circle cx="7" cy="7" r="6.4" fill="none" stroke="#1f9a1f" stroke-width="1.05"/><path d="M3.6 7.3L6.1 9.1L10.2 4.9" fill="none" stroke="#1f9a1f" stroke-width="1.4" stroke-linecap="round" stroke-linejoin="round"/></svg></div>
<div class="pill src">10.100.5.44</div>
<div class="rarr"><svg width="14" height="14" viewBox="0 0 14 14" style="display:block"><path d="M0.8 3.5H13.1M10 0.6L13.1 3.5L10 6.5M13.2 10.5H0.9M4 7.6L0.9 10.5L4 13.4" fill="none" stroke="#444" stroke-width="1.35" stroke-linecap="round" stroke-linejoin="round"/></svg></div>
<div class="pill dst">10.100.1.7</div>
<div class="proto">UDP: 123</div>
<div class="svc">NTP</div>
<div class="sel act"><span class="dot"></span><span class="t">forward</span><span class="ch"><svg width="12" height="7" viewBox="0 0 12 7" style="display:block"><path d="M0.8 0.8L6 6L11.2 0.8" fill="none" stroke="#444" stroke-width="1.4" stroke-linecap="round" stroke-linejoin="round"/></svg></span></div>
<div class="sel dir"><span class="t">Bi-directional</span><span class="ch"><svg width="12" height="7" viewBox="0 0 12 7" style="display:block"><path d="M0.8 0.8L6 6L11.2 0.8" fill="none" stroke="#444" stroke-width="1.4" stroke-linecap="round" stroke-linejoin="round"/></svg></span></div>
<div class="ico doc"><svg width="16" height="16" viewBox="0 0 16 16" style="display:block"><path d="M6.6 13.15H2.6C1.95 13.15 1.45 12.65 1.45 12V1.9C1.45 1.25 1.95 0.75 2.6 0.75H9.2C9.85 0.75 10.35 1.25 10.35 1.9V5.4" fill="none" stroke="#1a1a1a" stroke-width="1.3" stroke-linecap="round"/><path d="M3.6 3.9H8.4M3.4 6.6H6.2M3.6 9.5H5.6" stroke="#1a1a1a" stroke-width="1.2" stroke-linecap="round"/><circle cx="11.8" cy="10.9" r="3.85" fill="#1a1a1a"/><path d="M11.8 9.3V13" stroke="#fff" stroke-width="1.1" stroke-linecap="round"/></svg></div>
<div class="ico trash"><svg width="14" height="15" viewBox="0 0 14 15" style="display:block"><path d="M2.55 3V12C2.55 12.65 3 13.15 3.7 13.15H10.1C10.8 13.15 11.25 12.65 11.25 12V3M1.6 2.5H12.2M4.3 2.4V1.8C4.3 1.2 4.8 0.75 5.4 0.75H8.4C9 0.75 9.5 1.2 9.5 1.8V2.4M5.4 5.3V10.7M8.4 5.3V10.7" fill="none" stroke="#1a1a1a" stroke-width="1.3" stroke-linecap="round" stroke-linejoin="round"/></svg></div>
</div>
</div></div>

</body></html>
